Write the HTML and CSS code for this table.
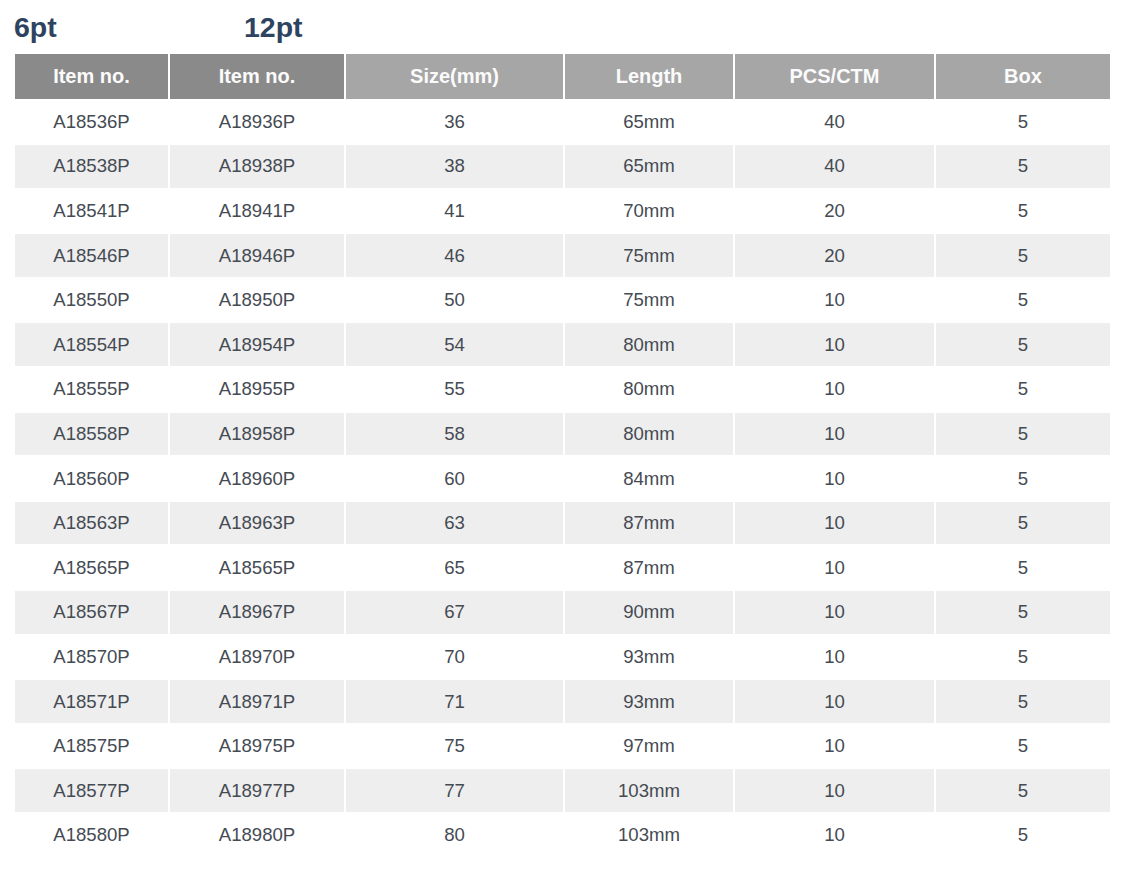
FILE: index.html
```html
<!DOCTYPE html>
<html>
<head>
<meta charset="utf-8">
<link rel="stylesheet" href="styles.css">
</head>
<body>
<div class="page">
  <div class="titles">
    <span class="title t1">6pt</span>
    <span class="title t2">12pt</span>
  </div>
  <div class="table">
    <div class="row head">
      <div class="cell dark">Item no.</div>
      <div class="cell dark">Item no.</div>
      <div class="cell">Size(mm)</div>
      <div class="cell">Length</div>
      <div class="cell">PCS/CTM</div>
      <div class="cell">Box</div>
    </div>
    <div class="row"><div class="cell">A18536P</div><div class="cell">A18936P</div><div class="cell">36</div><div class="cell">65mm</div><div class="cell">40</div><div class="cell">5</div></div>
    <div class="row alt"><div class="cell">A18538P</div><div class="cell">A18938P</div><div class="cell">38</div><div class="cell">65mm</div><div class="cell">40</div><div class="cell">5</div></div>
    <div class="row"><div class="cell">A18541P</div><div class="cell">A18941P</div><div class="cell">41</div><div class="cell">70mm</div><div class="cell">20</div><div class="cell">5</div></div>
    <div class="row alt"><div class="cell">A18546P</div><div class="cell">A18946P</div><div class="cell">46</div><div class="cell">75mm</div><div class="cell">20</div><div class="cell">5</div></div>
    <div class="row"><div class="cell">A18550P</div><div class="cell">A18950P</div><div class="cell">50</div><div class="cell">75mm</div><div class="cell">10</div><div class="cell">5</div></div>
    <div class="row alt"><div class="cell">A18554P</div><div class="cell">A18954P</div><div class="cell">54</div><div class="cell">80mm</div><div class="cell">10</div><div class="cell">5</div></div>
    <div class="row"><div class="cell">A18555P</div><div class="cell">A18955P</div><div class="cell">55</div><div class="cell">80mm</div><div class="cell">10</div><div class="cell">5</div></div>
    <div class="row alt"><div class="cell">A18558P</div><div class="cell">A18958P</div><div class="cell">58</div><div class="cell">80mm</div><div class="cell">10</div><div class="cell">5</div></div>
    <div class="row"><div class="cell">A18560P</div><div class="cell">A18960P</div><div class="cell">60</div><div class="cell">84mm</div><div class="cell">10</div><div class="cell">5</div></div>
    <div class="row alt"><div class="cell">A18563P</div><div class="cell">A18963P</div><div class="cell">63</div><div class="cell">87mm</div><div class="cell">10</div><div class="cell">5</div></div>
    <div class="row"><div class="cell">A18565P</div><div class="cell">A18565P</div><div class="cell">65</div><div class="cell">87mm</div><div class="cell">10</div><div class="cell">5</div></div>
    <div class="row alt"><div class="cell">A18567P</div><div class="cell">A18967P</div><div class="cell">67</div><div class="cell">90mm</div><div class="cell">10</div><div class="cell">5</div></div>
    <div class="row"><div class="cell">A18570P</div><div class="cell">A18970P</div><div class="cell">70</div><div class="cell">93mm</div><div class="cell">10</div><div class="cell">5</div></div>
    <div class="row alt"><div class="cell">A18571P</div><div class="cell">A18971P</div><div class="cell">71</div><div class="cell">93mm</div><div class="cell">10</div><div class="cell">5</div></div>
    <div class="row"><div class="cell">A18575P</div><div class="cell">A18975P</div><div class="cell">75</div><div class="cell">97mm</div><div class="cell">10</div><div class="cell">5</div></div>
    <div class="row alt"><div class="cell">A18577P</div><div class="cell">A18977P</div><div class="cell">77</div><div class="cell">103mm</div><div class="cell">10</div><div class="cell">5</div></div>
    <div class="row"><div class="cell">A18580P</div><div class="cell">A18980P</div><div class="cell">80</div><div class="cell">103mm</div><div class="cell">10</div><div class="cell">5</div></div>
  </div>
</div>
</body>
</html>
```

FILE: styles.css
```css
html, body {
  margin: 0;
  padding: 0;
  background: #ffffff;
}

.page {
  padding: 11px 20px 0 15px;
  font-family: "Liberation Sans", Arial, sans-serif;
}

.titles {
  display: flex;
  height: 32px;
  margin-bottom: 11px;
}

.title {
  font-size: 28.5px;
  font-weight: bold;
  line-height: 32px;
  color: #2e4360;
}

.t1 {
  margin-left: -1px;
  width: 230px;
}

.table {
  display: flex;
  flex-direction: column;
  gap: 2px;
  width: 1095px;
}

.row {
  display: grid;
  grid-template-columns: 153px 174px 217px 168px 199px 174px;
  column-gap: 2px;
  height: 42.6px;
}

.cell {
  display: flex;
  align-items: center;
  justify-content: center;
  font-size: 18.6px;
  color: #454b53;
}

.alt .cell {
  background: #eeeeee;
}

.head {
  height: 44.5px;
}

.head .cell {
  background: #a6a6a6;
  color: #fbfbfb;
  font-weight: bold;
  font-size: 20px;
}

.head .cell.dark {
  background: #8a8a8a;
}
```
